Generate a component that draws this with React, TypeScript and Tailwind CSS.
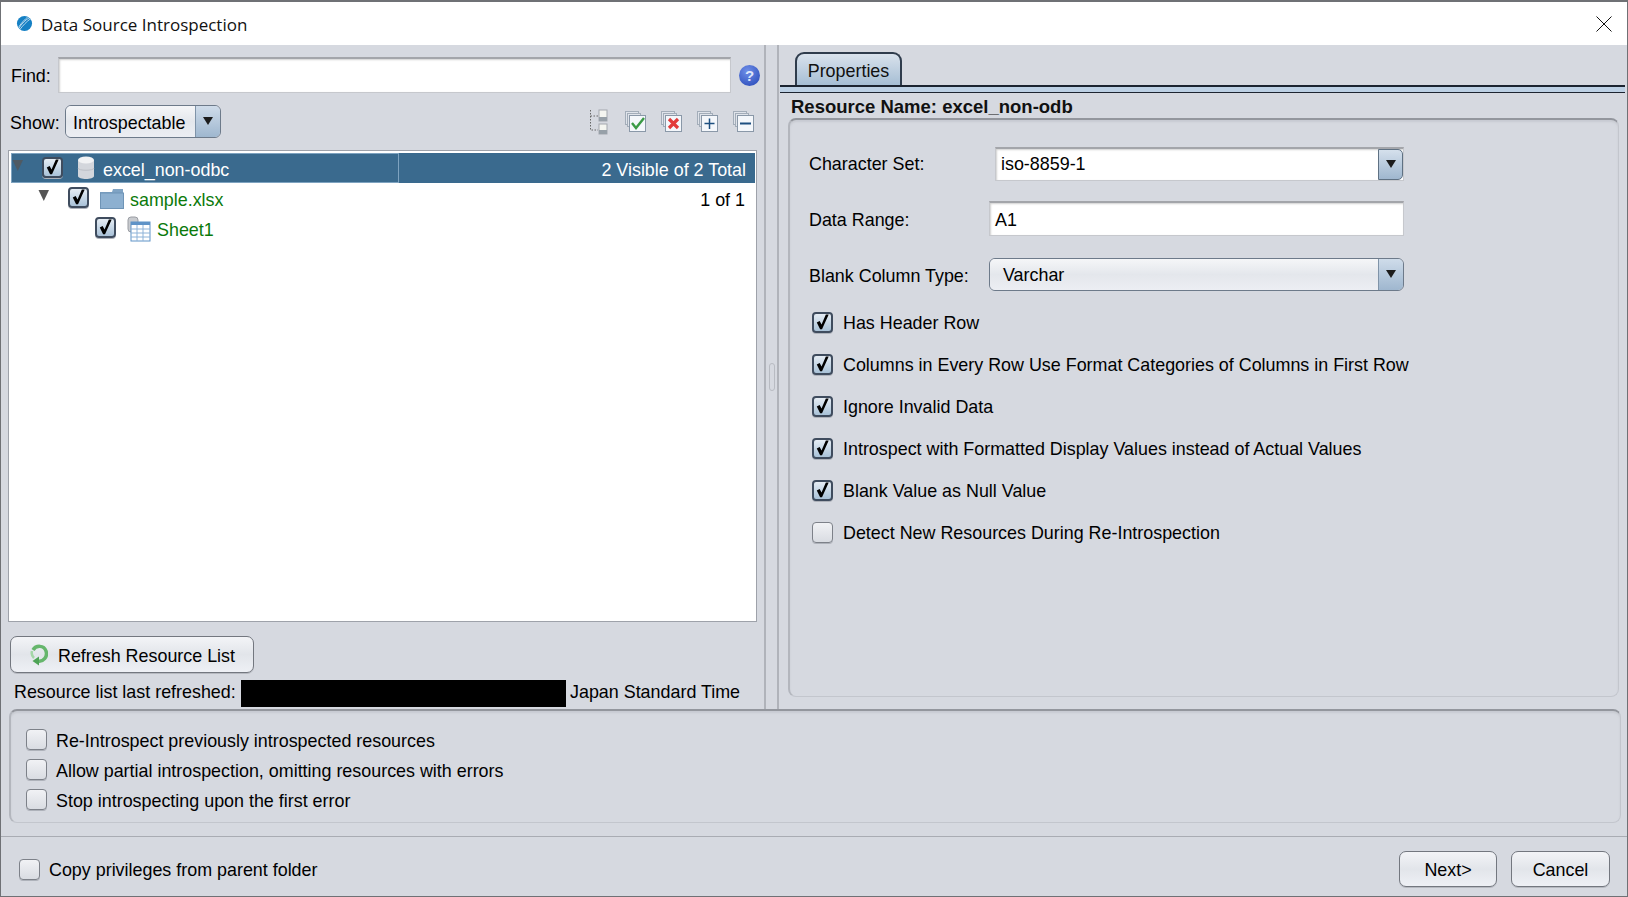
import React from "react";

const panel = "rounded-[8px] border border-[#c3c6cd] border-t-2 border-t-[#93969d] border-l-2 border-l-[#b3b6bd] shadow-[inset_0_2px_2px_#c8cbd2]";
const raised = "border border-[#73777f] bg-gradient-to-b from-[#f3f4f7] via-[#e2e5ea] to-[#eef0f5] shadow-[0_1px_0_#b6b9c0]";
const field = "border border-[#c6c8cd] border-t-2 border-t-[#a3a5aa] bg-white shadow-[inset_1px_1px_2px_#d0d0d0]";

function Check({ on = false }: { on?: boolean }) {
  if (on) {
    return (
      <span className="relative block h-[21px] w-[21px] shrink-0 rounded-[4px] border-2 border-[#3f4c5e] bg-gradient-to-b from-[#e6edf4] to-[#a9c2d8] shadow-[0_1px_0_#aeb2ba]">
        <svg viewBox="0 0 22 22" className="absolute left-[-2px] top-[-2px] h-[21px] w-[21px]">
          <path d="M5 11 L8 9.5 L10 13 L14.5 2.5 L17.5 2.5 L10.5 18 L8.5 18 Z" fill="#000" />
        </svg>
      </span>
    );
  }
  return (
    <span className="block h-[21px] w-[21px] shrink-0 rounded-[4px] border border-[#7d8189] bg-gradient-to-b from-[#f1f2f5] to-[#d9dce2] shadow-[0_1px_0_#aeb2ba]" />
  );
}

function Arrow() {
  return (
    <svg viewBox="0 0 12 8" className="h-[8px] w-[12px]">
      <path d="M1 0 L11 0 L6 8 Z" fill="#1c1c1c" />
    </svg>
  );
}

function TreeArrow({ color }: { color: string }) {
  return (
    <svg viewBox="0 0 12 11" className="mb-[5px] h-[11px] w-[12px] shrink-0">
      <path d="M0.5 0 L11 0 L5.8 11 Z" fill={color} />
    </svg>
  );
}

function ComboButton() {
  return (
    <span className="flex w-[25px] shrink-0 items-center justify-center self-stretch rounded-r-[5px] border border-[#5f7183] bg-gradient-to-b from-[#d5e0ec] to-[#9fb7cf] pb-[1px]">
      <Arrow />
    </span>
  );
}

function Logo() {
  return (
    <svg viewBox="0 0 18 18" className="h-[17px] w-[17px]">
      <circle cx="9" cy="9" r="8" fill="#1580c4" />
      <path d="M2.5 15 C6 9 10 5 15 2.5 M4 15.5 C7.5 11 11 7 15.5 4 M3 12.5 C6 8 9 5 12.5 2" stroke="#fff" strokeWidth="0.7" fill="none" />
    </svg>
  );
}

function Help() {
  return (
    <span className="flex h-[21px] w-[21px] items-center justify-center rounded-full bg-[radial-gradient(circle_at_40%_30%,#6f8fe8,#2344b5)] text-[15px] font-bold text-[#dfe6fa]">
      ?
    </span>
  );
}

function TreeToolIcon() {
  return (
    <svg viewBox="0 0 18 26" className="h-[26px] w-[18px]">
      <path d="M0.5 1 V21 H8 M0.5 7 H8" stroke="#666" strokeWidth="1" strokeDasharray="1.5 1.5" fill="none" />
      <rect x="9" y="1" width="8" height="11" fill="#f4f5f0" stroke="#a3a8ae" />
      <rect x="9" y="15" width="8" height="10" fill="#f4f5f0" stroke="#a3a8ae" />
      <rect x="9" y="8" width="8" height="4" fill="#97a0a8" />
      <rect x="9" y="21" width="8" height="4" fill="#97a0a8" />
    </svg>
  );
}

function Stacked({ children }: { children: React.ReactNode }) {
  return (
    <svg viewBox="0 0 21 21" className="h-[21px] w-[21px]">
      <rect x="0.5" y="0.5" width="13" height="13" fill="#dfe3ea" stroke="#a3adb9" />
      <rect x="2.5" y="2.5" width="13" height="13" fill="#dfe3ea" stroke="#a3adb9" />
      <rect x="4.5" y="4.5" width="16" height="16" fill="#f4f7fb" stroke="#8a98a8" />
      {children}
    </svg>
  );
}

function DbIcon() {
  return (
    <svg viewBox="0 0 18 24" className="h-[24px] w-[18px]">
      <path d="M1 4 V20 C1 24 17 24 17 20 V4 Z" fill="#d3d6dc" />
      <ellipse cx="9" cy="4" rx="8" ry="3.5" fill="#f1f2f4" />
      <path d="M1 12 C1 15 17 15 17 12" stroke="#bcbfc6" fill="none" />
    </svg>
  );
}

function FolderIcon() {
  return (
    <svg viewBox="0 0 24 20" className="h-[20px] w-[24px]">
      <path d="M0 3 H12 L13 0 H23 V19 H0 Z" fill="#7fa3c4" />
      <rect x="0.5" y="4" width="23" height="15.5" fill="#8db0d0" stroke="#6f94b6" />
    </svg>
  );
}

function SheetIcon() {
  return (
    <svg viewBox="0 0 24 26" className="h-[26px] w-[24px]">
      <rect x="1" y="1" width="10" height="15" rx="3" fill="#c9cbcf" stroke="#9a9da3" />
      <rect x="4" y="6" width="19" height="19" fill="#fff" stroke="#5f93c7" />
      <rect x="4" y="6" width="19" height="3" fill="#5f93c7" />
      <path d="M4 13 H23 M4 17 H23 M4 21 H23 M10 9 V25 M16 9 V25" stroke="#8eb3d8" />
    </svg>
  );
}

function RefreshIcon() {
  return (
    <svg viewBox="0 0 18 22" className="h-[22px] w-[18px]">
      <path d="M3 6 C6 1 14 1 16 7 C18 13 13 18 8 17" stroke="#66b66c" strokeWidth="3.5" fill="none" />
      <path d="M9 12.5 L9 21.5 L2.5 17 Z" fill="#4ea356" />
      <path d="M2 7 A7 7 0 0 0 4 14" stroke="#a4d6a7" strokeWidth="2.5" fill="none" />
    </svg>
  );
}

function Option({ label, on = false }: { label: string; on?: boolean }) {
  return (
    <div className="flex h-[22px] items-center gap-[10px]">
      <Check on={on} />
      <span className="whitespace-nowrap pt-[2px]">{label}</span>
    </div>
  );
}

function SmallOption({ label }: { label: string }) {
  return (
    <div className="flex h-[30px] items-center gap-[9px]">
      <Check />
      <span className="pt-[5px]">{label}</span>
    </div>
  );
}

export default function App() {
  return (
    <div className="flex h-[897px] w-[1628px] flex-col overflow-hidden border border-t-2 border-[#6f7175] bg-[#d6d9e0] font-['Liberation_Sans',sans-serif] text-[17.9px] leading-none text-black">
      {/* title bar */}
      <div className="flex h-[43px] shrink-0 items-center bg-white pl-[15px] pr-[15px] font-['Open_Sans',sans-serif] text-[17px] text-[#111]">
        <Logo />
        <span className="ml-[8px] pt-[1px]">Data Source Introspection</span>
        <svg viewBox="0 0 16 16" className="ml-auto h-[16px] w-[16px]">
          <path d="M0.5 0.5 L15.5 15.5 M15.5 0.5 L0.5 15.5" stroke="#111" strokeWidth="1" />
        </svg>
      </div>

      {/* split area */}
      <div className="flex h-[664px] shrink-0">
        {/* left side */}
        <div className="flex w-[763px] shrink-0 flex-col pl-[7px] pt-[12px]">
          <div className="flex items-center pr-[4px]">
            <span className="ml-[3px] w-[47px] pt-[4px]">Find:</span>
            <div className={`h-[36px] flex-1 ${field}`} />
            <span className="ml-[8px]">
              <Help />
            </span>
          </div>
          <div className="mt-[12px] flex items-center pr-[10px]">
            <span className="ml-[2px] w-[55px] pt-[4px]">Show:</span>
            <div className="flex h-[33px] w-[156px] overflow-hidden rounded-[6px] border border-[#6d7a8a]">
              <span className="flex flex-1 items-center bg-gradient-to-b from-[#f5f6f8] via-[#e4e7ec] to-[#eceef3] pl-[7px] pt-[4px]">
                Introspectable
              </span>
              <span className="flex w-[25px] items-center justify-center border-l border-[#7f93a8] bg-gradient-to-b from-[#cfdcea] to-[#9fb7cf] pb-[1px]">
                <Arrow />
              </span>
            </div>
            <div className="ml-auto flex items-center gap-[15px]">
              <span className="mr-[2px]">
                <TreeToolIcon />
              </span>
              <Stacked>
                <path d="M7 12 L11 17 L19 7" stroke="#3a9a45" strokeWidth="2.4" fill="none" />
              </Stacked>
              <Stacked>
                <path d="M8 8 L17 17 M17 8 L8 17" stroke="#e23b3b" strokeWidth="3.2" />
              </Stacked>
              <Stacked>
                <path d="M12.5 7.5 V18 M7.5 12.5 H17.5" stroke="#1d4f80" strokeWidth="1.5" />
              </Stacked>
              <Stacked>
                <path d="M7 12.5 H18" stroke="#1d4f80" strokeWidth="2" />
              </Stacked>
            </div>
          </div>

          {/* tree */}
          <div className="mr-[7px] mt-[12px] flex h-[472px] flex-col border border-[#9ea2aa] bg-white pl-[2px] pr-[1px] pt-[2px]">
            <div className="flex h-[30px] items-center bg-[#3a6a8e] text-white">
              <div className="flex h-full w-[388px] items-center border border-[#7ea3c0]">
                <TreeArrow color="#4f5a63" />
                <span className="mb-[2px] ml-[18px]">
                  <Check on />
                </span>
                <span className="ml-[14px]">
                  <DbIcon />
                </span>
                <span className="ml-[8px] mt-[6px]">excel_non-odbc</span>
              </div>
              <span className="ml-auto mt-[5px] pr-[9px]">2 Visible of 2 Total</span>
            </div>
            <div className="flex h-[30px] items-center pl-[27px] text-[#0b7a0b]">
              <TreeArrow color="#555" />
              <span className="mb-[2px] ml-[18px]">
                <Check on />
              </span>
              <span className="ml-[11px] mt-[1px]">
                <FolderIcon />
              </span>
              <span className="ml-[6px] mt-[6px]">sample.xlsx</span>
              <span className="ml-auto mt-[5px] pr-[10px] text-black">1 of 1</span>
            </div>
            <div className="flex h-[30px] items-center pl-[84px] text-[#0b7a0b]">
              <span className="mb-[2px]">
                <Check on />
              </span>
              <span className="ml-[11px] mt-[1px]">
                <SheetIcon />
              </span>
              <span className="ml-[6px] mt-[6px]">Sheet1</span>
            </div>
          </div>

          <button className={`ml-[2px] mt-[14px] flex h-[37px] w-[244px] shrink-0 items-center rounded-[7px] pl-[19px] ${raised}`}>
            <RefreshIcon />
            <span className="ml-[10px] pt-[4px]">Refresh Resource List</span>
          </button>
          <div className="mt-[7px] flex h-[27px] items-center pl-[6px]">
            <span className="w-[227px] pb-[2px]">Resource list last refreshed:</span>
            <span className="h-[27px] w-[325px] bg-black" />
            <span className="ml-[4px] pb-[2px]">Japan Standard Time</span>
          </div>
        </div>

        {/* splitter */}
        <div className="flex w-[15px] shrink-0 items-center justify-center border-x-2 border-[#b0b3ba]">
          <span className="h-[28px] w-[6px] rounded-[3px] border border-[#b8bbc2]" />
        </div>

        {/* right side */}
        <div className="flex min-w-0 flex-1 flex-col pl-[1px] pr-[2px] pt-[7px]">
          <div className="flex h-[35px] shrink-0 items-end border-b-2 border-[#1c2430] pl-[15px]">
            <div className="flex h-[33px] w-[107px] items-center justify-center rounded-t-[9px] border-2 border-b-0 border-[#2f3c4c] bg-gradient-to-b from-[#d9e2ec] to-[#a6bed4] pt-[4px] text-[#111]">
              Properties
            </div>
          </div>
          <div className="h-[6px] shrink-0 border-b border-[#1c2430] bg-[#bcd0e4]" />
          <div className="ml-[11px] mt-[5px] text-[18.5px] font-bold text-[#111]">Resource Name: excel_non-odb</div>
          <div className={`ml-[8px] mr-[6px] mt-[1px] h-[579px] ${panel}`}>
            <div className="flex flex-col pl-[19px] pr-[214px] pt-[27px]">
              <div className="flex h-[34px] items-center">
                <span className="w-[186px] pt-[2px]">Character Set:</span>
                <div className={`flex h-[34px] flex-1 ${field}`}>
                  <span className="flex flex-1 items-center pl-[5px] pt-[2px]">iso-8859-1</span>
                  <ComboButton />
                </div>
              </div>
              <div className="mt-[20px] flex h-[35px] items-center">
                <span className="w-[180px] pt-[6px]">Data Range:</span>
                <div className={`flex h-[35px] flex-1 items-center pl-[5px] pt-[4px] ${field}`}>A1</div>
              </div>
              <div className="mt-[22px] flex h-[33px] items-center">
                <span className="w-[180px] pt-[6px]">Blank Column Type:</span>
                <div className="flex h-[33px] flex-1 overflow-hidden rounded-[6px] border border-[#6d7a8a]">
                  <span className="flex flex-1 items-center bg-gradient-to-b from-[#f5f6f8] via-[#e4e7ec] to-[#eceef3] pl-[13px] pt-[4px]">
                    Varchar
                  </span>
                  <span className="flex w-[25px] items-center justify-center border-l border-[#7f93a8] bg-gradient-to-b from-[#cfdcea] to-[#9fb7cf] pb-[1px]">
                    <Arrow />
                  </span>
                </div>
              </div>
              <div className="mt-[21px] flex flex-col gap-[20px] pl-[3px]">
                <Option on label="Has Header Row" />
                <Option on label="Columns in Every Row Use Format Categories of Columns in First Row" />
                <Option on label="Ignore Invalid Data" />
                <Option on label="Introspect with Formatted Display Values instead of Actual Values" />
                <Option on label="Blank Value as Null Value" />
                <Option label="Detect New Resources During Re-Introspection" />
              </div>
            </div>
          </div>
        </div>
      </div>

      {/* introspection options */}
      <div className={`ml-[8px] mr-[6px] flex h-[114px] shrink-0 flex-col pl-[15px] pt-[13px] ${panel}`}>
        <SmallOption label="Re-Introspect previously introspected resources" />
        <SmallOption label="Allow partial introspection, omitting resources with errors" />
        <SmallOption label="Stop introspecting upon the first error" />
      </div>

      {/* footer */}
      <div className="mt-[13px] flex flex-1 items-center border-t border-[#a9acb3] pl-[18px] pr-[17px] pt-[5px]">
        <div className="flex items-center gap-[9px]">
          <Check />
          <span className="pt-[4px]">Copy privileges from parent folder</span>
        </div>
        <button className={`ml-auto h-[36px] w-[98px] rounded-[7px] pt-[4px] ${raised}`}>Next&gt;</button>
        <button className={`ml-[14px] h-[36px] w-[99px] rounded-[7px] pt-[4px] ${raised}`}>Cancel</button>
      </div>
    </div>
  );
}
